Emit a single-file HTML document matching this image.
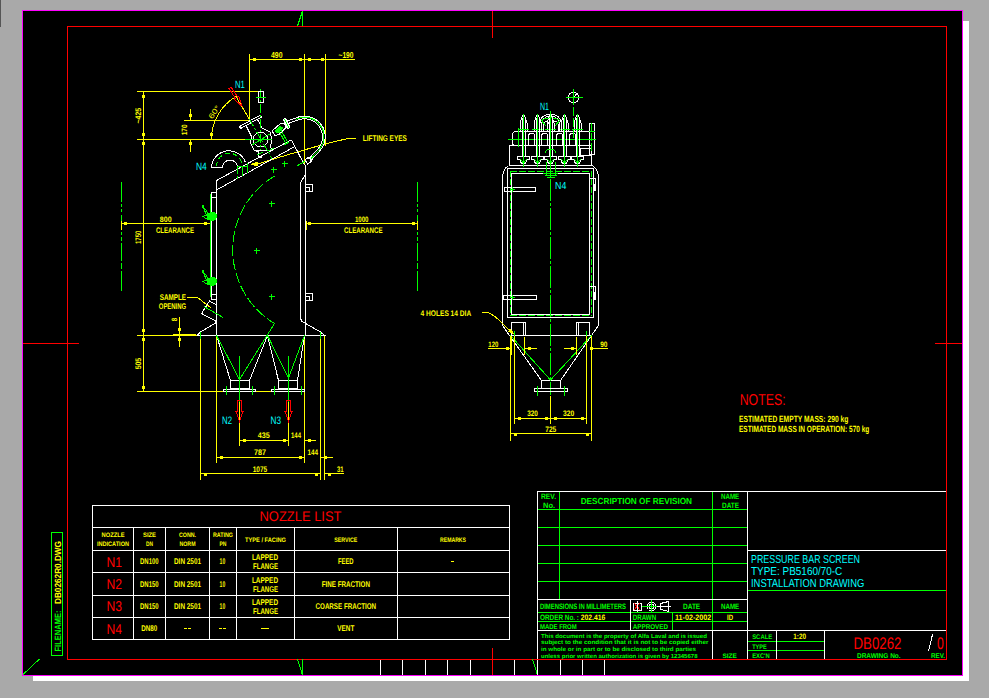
<!DOCTYPE html>
<html><head><meta charset="utf-8"><title>DB0262 Pressure Bar Screen - Installation Drawing</title>
<style>
html,body{margin:0;padding:0;background:#a9a9a9;overflow:hidden}
svg{display:block;font-family:"Liberation Sans",sans-serif}
svg text{stroke:none}
</style></head><body>
<svg width="989" height="698" viewBox="0 0 989 698" shape-rendering="crispEdges" fill="none" stroke-width="1" text-rendering="geometricPrecision">
<rect x="0" y="0" width="989" height="698" fill="#a9a9a9" stroke="none"/>
<rect x="0" y="0" width="1" height="27" fill="#555555" stroke="none"/>
<rect x="963" y="21" width="6" height="660" fill="#ffffff" stroke="none"/>
<rect x="33" y="676" width="936" height="5" fill="#ffffff" stroke="none"/>
<rect x="22" y="10" width="941" height="666" fill="#000000" stroke="none"/>
<rect x="22.5" y="10.5" width="940" height="665" stroke="#ff00ff" fill="none"/>
<rect x="67.5" y="26.5" width="879" height="633" stroke="#ff0000" fill="none"/>
<line x1="492.5" y1="11" x2="492.5" y2="38" stroke="#ff0000"/>
<line x1="492.5" y1="648" x2="492.5" y2="675" stroke="#ff0000"/>
<line x1="23" y1="343.5" x2="79" y2="343.5" stroke="#ff0000"/>
<line x1="935" y1="343.5" x2="962" y2="343.5" stroke="#ff0000"/>
<line x1="302.5" y1="11" x2="302.5" y2="26" stroke="#00ff00"/>
<line x1="302.5" y1="11" x2="297.5" y2="26" stroke="#00ff00"/>
<line x1="302.5" y1="659" x2="302.5" y2="675" stroke="#00ff00"/>
<line x1="297.5" y1="659.5" x2="302.5" y2="675" stroke="#00ff00"/>
<line x1="532.5" y1="659.5" x2="537.5" y2="675" stroke="#00ff00"/>
<line x1="23" y1="674.5" x2="39.5" y2="659" stroke="#00ff00"/>
<line x1="380.5" y1="660" x2="380.5" y2="675" stroke="#ffffff"/>
<line x1="402.5" y1="660" x2="402.5" y2="675" stroke="#ffffff"/>
<line x1="425.5" y1="660" x2="425.5" y2="675" stroke="#ffffff"/>
<line x1="447.5" y1="660" x2="447.5" y2="675" stroke="#ffffff"/>
<line x1="470.5" y1="660" x2="470.5" y2="675" stroke="#ffffff"/>
<line x1="514.5" y1="660" x2="514.5" y2="675" stroke="#ffffff"/>
<line x1="537.5" y1="660" x2="537.5" y2="675" stroke="#ffffff"/>
<line x1="560.5" y1="660" x2="560.5" y2="675" stroke="#ffffff"/>
<line x1="582.5" y1="660" x2="582.5" y2="675" stroke="#ffffff"/>
<line x1="604.5" y1="660" x2="604.5" y2="675" stroke="#ffffff"/>
<rect x="51.5" y="532.5" width="11" height="123" stroke="#00ff00" fill="none"/>
<text x="61" y="651.5" font-size="9.08" fill="#00ff00" textLength="41" lengthAdjust="spacingAndGlyphs" font-weight="bold" transform="rotate(-90 61 651.5)">FILENAME:</text>
<text x="61" y="604" font-size="9.08" fill="#ffff00" textLength="63" lengthAdjust="spacingAndGlyphs" font-weight="bold" transform="rotate(-90 61 604)">DB0262R0.DWG</text>
<rect x="92.5" y="505.5" width="417" height="134" stroke="#ffffff" fill="none"/>
<line x1="92" y1="527.5" x2="510" y2="527.5" stroke="#ffffff"/>
<line x1="92" y1="550.5" x2="510" y2="550.5" stroke="#ffffff"/>
<line x1="92" y1="572.5" x2="510" y2="572.5" stroke="#ffffff"/>
<line x1="92" y1="595.5" x2="510" y2="595.5" stroke="#ffffff"/>
<line x1="92" y1="617.5" x2="510" y2="617.5" stroke="#ffffff"/>
<line x1="133.5" y1="527" x2="133.5" y2="639" stroke="#ffffff"/>
<line x1="165.5" y1="527" x2="165.5" y2="639" stroke="#ffffff"/>
<line x1="209.5" y1="527" x2="209.5" y2="639" stroke="#ffffff"/>
<line x1="236.5" y1="527" x2="236.5" y2="639" stroke="#ffffff"/>
<line x1="294.5" y1="527" x2="294.5" y2="639" stroke="#ffffff"/>
<line x1="397.5" y1="527" x2="397.5" y2="639" stroke="#ffffff"/>
<text x="259.5" y="521" font-size="13.97" fill="#ff0000" textLength="82" lengthAdjust="spacingAndGlyphs">NOZZLE LIST</text>
<text x="101.5" y="536.5" font-size="6.42" fill="#ffff00" textLength="23" lengthAdjust="spacingAndGlyphs" font-weight="bold">NOZZLE</text>
<text x="97" y="546" font-size="6.42" fill="#ffff00" textLength="32" lengthAdjust="spacingAndGlyphs" font-weight="bold">INDICATION</text>
<text x="143" y="536.5" font-size="6.42" fill="#ffff00" textLength="13" lengthAdjust="spacingAndGlyphs" font-weight="bold">SIZE</text>
<text x="146" y="546" font-size="6.42" fill="#ffff00" textLength="7" lengthAdjust="spacingAndGlyphs" font-weight="bold">DN</text>
<text x="179" y="536.5" font-size="6.42" fill="#ffff00" textLength="17" lengthAdjust="spacingAndGlyphs" font-weight="bold">CONN.</text>
<text x="179.5" y="546" font-size="6.42" fill="#ffff00" textLength="16" lengthAdjust="spacingAndGlyphs" font-weight="bold">NORM</text>
<text x="213" y="536.5" font-size="6.42" fill="#ffff00" textLength="20" lengthAdjust="spacingAndGlyphs" font-weight="bold">RATING</text>
<text x="219.5" y="546" font-size="6.42" fill="#ffff00" textLength="7" lengthAdjust="spacingAndGlyphs" font-weight="bold">PN</text>
<text x="245" y="542" font-size="6.42" fill="#ffff00" textLength="41" lengthAdjust="spacingAndGlyphs" font-weight="bold">TYPE / FACING</text>
<text x="334.2" y="542" font-size="6.42" fill="#ffff00" textLength="23" lengthAdjust="spacingAndGlyphs" font-weight="bold">SERVICE</text>
<text x="440" y="542" font-size="6.42" fill="#ffff00" textLength="26" lengthAdjust="spacingAndGlyphs" font-weight="bold">REMARKS</text>
<text x="106.5" y="566.5" font-size="14.25" fill="#ff0000" textLength="15.5" lengthAdjust="spacingAndGlyphs">N1</text>
<text x="140.05" y="564.3" font-size="8.38" fill="#ffff00" textLength="18.5" lengthAdjust="spacingAndGlyphs" font-weight="bold">DN100</text>
<text x="174" y="564.3" font-size="8.38" fill="#ffff00" textLength="27" lengthAdjust="spacingAndGlyphs" font-weight="bold">DIN 2501</text>
<text x="219.6" y="564.3" font-size="8.38" fill="#ffff00" textLength="5.6" lengthAdjust="spacingAndGlyphs" font-weight="bold">10</text>
<text x="251.9" y="560.3" font-size="8.38" fill="#ffff00" textLength="26.2" lengthAdjust="spacingAndGlyphs" font-weight="bold">LAPPED</text>
<text x="253" y="569.2" font-size="8.38" fill="#ffff00" textLength="25" lengthAdjust="spacingAndGlyphs" font-weight="bold">FLANGE</text>
<text x="338" y="564.3" font-size="8.38" fill="#ffff00" textLength="15.6" lengthAdjust="spacingAndGlyphs" font-weight="bold">FEED</text>
<text x="106.5" y="588.8" font-size="14.25" fill="#ff0000" textLength="15.5" lengthAdjust="spacingAndGlyphs">N2</text>
<text x="140.05" y="586.6" font-size="8.38" fill="#ffff00" textLength="18.5" lengthAdjust="spacingAndGlyphs" font-weight="bold">DN150</text>
<text x="174" y="586.6" font-size="8.38" fill="#ffff00" textLength="27" lengthAdjust="spacingAndGlyphs" font-weight="bold">DIN 2501</text>
<text x="219.6" y="586.6" font-size="8.38" fill="#ffff00" textLength="5.6" lengthAdjust="spacingAndGlyphs" font-weight="bold">10</text>
<text x="251.9" y="582.6" font-size="8.38" fill="#ffff00" textLength="26.2" lengthAdjust="spacingAndGlyphs" font-weight="bold">LAPPED</text>
<text x="253" y="591.5" font-size="8.38" fill="#ffff00" textLength="25" lengthAdjust="spacingAndGlyphs" font-weight="bold">FLANGE</text>
<text x="321.65" y="586.6" font-size="8.38" fill="#ffff00" textLength="48.3" lengthAdjust="spacingAndGlyphs" font-weight="bold">FINE FRACTION</text>
<text x="106.5" y="611.3" font-size="14.25" fill="#ff0000" textLength="15.5" lengthAdjust="spacingAndGlyphs">N3</text>
<text x="140.05" y="609.1" font-size="8.38" fill="#ffff00" textLength="18.5" lengthAdjust="spacingAndGlyphs" font-weight="bold">DN150</text>
<text x="174" y="609.1" font-size="8.38" fill="#ffff00" textLength="27" lengthAdjust="spacingAndGlyphs" font-weight="bold">DIN 2501</text>
<text x="219.6" y="609.1" font-size="8.38" fill="#ffff00" textLength="5.6" lengthAdjust="spacingAndGlyphs" font-weight="bold">10</text>
<text x="251.9" y="605.1" font-size="8.38" fill="#ffff00" textLength="26.2" lengthAdjust="spacingAndGlyphs" font-weight="bold">LAPPED</text>
<text x="253" y="614" font-size="8.38" fill="#ffff00" textLength="25" lengthAdjust="spacingAndGlyphs" font-weight="bold">FLANGE</text>
<text x="315.55" y="609.1" font-size="8.38" fill="#ffff00" textLength="60.5" lengthAdjust="spacingAndGlyphs" font-weight="bold">COARSE FRACTION</text>
<text x="106.5" y="633.6" font-size="14.25" fill="#ff0000" textLength="15.5" lengthAdjust="spacingAndGlyphs">N4</text>
<text x="141.3" y="631.4" font-size="8.38" fill="#ffff00" textLength="16" lengthAdjust="spacingAndGlyphs" font-weight="bold">DN80</text>
<line x1="184" y1="628.5" x2="187" y2="628.5" stroke="#ffff00"/>
<line x1="188" y1="628.5" x2="191" y2="628.5" stroke="#ffff00"/>
<line x1="219" y1="628.5" x2="222" y2="628.5" stroke="#ffff00"/>
<line x1="223" y1="628.5" x2="226" y2="628.5" stroke="#ffff00"/>
<line x1="261" y1="628.5" x2="269" y2="628.5" stroke="#ffff00"/>
<text x="337.3" y="631.4" font-size="8.38" fill="#ffff00" textLength="17" lengthAdjust="spacingAndGlyphs" font-weight="bold">VENT</text>
<line x1="451" y1="561.5" x2="454" y2="561.5" stroke="#ffff00"/>
<line x1="537" y1="509.5" x2="748" y2="509.5" stroke="#00ff00"/>
<line x1="537" y1="527.5" x2="748" y2="527.5" stroke="#00ff00"/>
<line x1="537" y1="545.5" x2="748" y2="545.5" stroke="#00ff00"/>
<line x1="537" y1="563.5" x2="748" y2="563.5" stroke="#00ff00"/>
<line x1="537" y1="581.5" x2="748" y2="581.5" stroke="#00ff00"/>
<line x1="559.5" y1="491" x2="559.5" y2="599" stroke="#00ff00"/>
<line x1="712.5" y1="491" x2="712.5" y2="630" stroke="#00ff00"/>
<line x1="537" y1="612.5" x2="748" y2="612.5" stroke="#00ff00"/>
<line x1="537" y1="621.5" x2="748" y2="621.5" stroke="#00ff00"/>
<line x1="672.5" y1="612" x2="672.5" y2="630" stroke="#00ff00"/>
<line x1="747" y1="590.5" x2="946" y2="590.5" stroke="#00ff00"/>
<line x1="747" y1="641.5" x2="825" y2="641.5" stroke="#00ff00"/>
<line x1="747" y1="650.5" x2="825" y2="650.5" stroke="#00ff00"/>
<line x1="537" y1="491.5" x2="946" y2="491.5" stroke="#ffffff"/>
<line x1="537.5" y1="491" x2="537.5" y2="659" stroke="#ffffff"/>
<line x1="747.5" y1="491" x2="747.5" y2="659" stroke="#ffffff"/>
<line x1="537" y1="599.5" x2="748" y2="599.5" stroke="#ffffff"/>
<line x1="537" y1="630.5" x2="946" y2="630.5" stroke="#ffffff"/>
<line x1="747" y1="550.5" x2="946" y2="550.5" stroke="#ffffff"/>
<line x1="630.5" y1="599" x2="630.5" y2="630" stroke="#ffffff"/>
<line x1="712.5" y1="630" x2="712.5" y2="659" stroke="#ffffff"/>
<line x1="776.5" y1="630" x2="776.5" y2="659" stroke="#ffffff"/>
<line x1="824.5" y1="630" x2="824.5" y2="659" stroke="#ffffff"/>
<text x="541" y="499.2" font-size="7.82" fill="#00ff00" textLength="15" lengthAdjust="spacingAndGlyphs" font-weight="bold">REV.</text>
<text x="543" y="507.8" font-size="7.82" fill="#00ff00" textLength="12" lengthAdjust="spacingAndGlyphs" font-weight="bold">No.</text>
<text x="580.7" y="504" font-size="8.8" fill="#00ff00" textLength="111.3" lengthAdjust="spacingAndGlyphs" font-weight="bold">DESCRIPTION  OF  REVISION</text>
<text x="721" y="499.2" font-size="7.82" fill="#00ff00" textLength="18.2" lengthAdjust="spacingAndGlyphs" font-weight="bold">NAME</text>
<text x="722" y="507.8" font-size="7.82" fill="#00ff00" textLength="17" lengthAdjust="spacingAndGlyphs" font-weight="bold">DATE</text>
<text x="540" y="609.2" font-size="7.82" fill="#00ff00" textLength="86" lengthAdjust="spacingAndGlyphs" font-weight="bold">DIMENSIONS IN MILLIMETERS</text>
<text x="540" y="620.3" font-size="7.82" fill="#00ff00" textLength="39" lengthAdjust="spacingAndGlyphs" font-weight="bold">ORDER No. :</text>
<text x="580.7" y="620.3" font-size="7.82" fill="#ffff00" textLength="24.5" lengthAdjust="spacingAndGlyphs" font-weight="bold">202.416</text>
<text x="540" y="629" font-size="6.98" fill="#00ff00" textLength="36.7" lengthAdjust="spacingAndGlyphs" font-weight="bold">MADE FROM</text>
<text x="632.8" y="620.3" font-size="7.82" fill="#00ff00" textLength="23.3" lengthAdjust="spacingAndGlyphs" font-weight="bold">DRAWN</text>
<text x="632.8" y="629" font-size="6.98" fill="#00ff00" textLength="35.2" lengthAdjust="spacingAndGlyphs" font-weight="bold">APPROVED</text>
<text x="683" y="609.2" font-size="7.82" fill="#00ff00" textLength="17.2" lengthAdjust="spacingAndGlyphs" font-weight="bold">DATE</text>
<text x="721" y="609.2" font-size="7.82" fill="#00ff00" textLength="18.2" lengthAdjust="spacingAndGlyphs" font-weight="bold">NAME</text>
<text x="675" y="620.3" font-size="7.82" fill="#ffff00" textLength="36.3" lengthAdjust="spacingAndGlyphs" font-weight="bold">11-02-2002</text>
<text x="727" y="620.3" font-size="7.82" fill="#ffff00" textLength="6" lengthAdjust="spacingAndGlyphs" font-weight="bold">ID</text>
<text x="541" y="637.5" font-size="5.87" fill="#00ff00" textLength="166" lengthAdjust="spacingAndGlyphs" font-weight="bold">This document is the property of Alfa Laval and is issued</text>
<text x="541" y="644.4" font-size="5.87" fill="#00ff00" textLength="167.5" lengthAdjust="spacingAndGlyphs" font-weight="bold">subject to the condition that it is not to be copied either</text>
<text x="541" y="651.2" font-size="5.87" fill="#00ff00" textLength="155" lengthAdjust="spacingAndGlyphs" font-weight="bold">in whole or in part or to be disclosed to third parties</text>
<text x="541" y="658" font-size="5.87" fill="#00ff00" textLength="156.5" lengthAdjust="spacingAndGlyphs" font-weight="bold">unless prior written authorization is given by 12345678</text>
<text x="722.4" y="658" font-size="6.42" fill="#00ff00" textLength="14.5" lengthAdjust="spacingAndGlyphs" font-weight="bold">SIZE</text>
<text x="752.2" y="639" font-size="6.7" fill="#00ff00" textLength="20" lengthAdjust="spacingAndGlyphs" font-weight="bold">SCALE</text>
<text x="752.2" y="648.8" font-size="6.7" fill="#00ff00" textLength="14.5" lengthAdjust="spacingAndGlyphs" font-weight="bold">TYPE</text>
<text x="752.2" y="658" font-size="6.7" fill="#00ff00" textLength="17.5" lengthAdjust="spacingAndGlyphs" font-weight="bold">EXC&#x27;N</text>
<text x="793.3" y="639" font-size="7.82" fill="#ffff00" textLength="12.7" lengthAdjust="spacingAndGlyphs" font-weight="bold">1:20</text>
<text x="751" y="562.8" font-size="11.59" fill="#00ffff" textLength="109" lengthAdjust="spacingAndGlyphs">PRESSURE BAR SCREEN</text>
<text x="751" y="575.2" font-size="11.59" fill="#00ffff" textLength="91.3" lengthAdjust="spacingAndGlyphs">TYPE: PB5160/70-C</text>
<text x="751" y="587.2" font-size="11.59" fill="#00ffff" textLength="113.3" lengthAdjust="spacingAndGlyphs">INSTALLATION DRAWING</text>
<text x="853.5" y="648.8" font-size="16.76" fill="#ff0000" textLength="48" lengthAdjust="spacingAndGlyphs">DB0262</text>
<line x1="932.5" y1="634.5" x2="928.5" y2="651" stroke="#ffffff"/>
<text x="937" y="648.8" font-size="16.76" fill="#ff0000" textLength="6.8" lengthAdjust="spacingAndGlyphs">0</text>
<text x="857" y="657.8" font-size="6.98" fill="#00ff00" textLength="43.6" lengthAdjust="spacingAndGlyphs" font-weight="bold">DRAWING No.</text>
<text x="931" y="657.8" font-size="6.98" fill="#00ff00" textLength="14" lengthAdjust="spacingAndGlyphs" font-weight="bold">REV.</text>
<rect x="633.5" y="603.5" width="8" height="7" stroke="#ffffff" fill="none"/>
<line x1="634" y1="603" x2="640" y2="610" stroke="#ff0000"/>
<line x1="640" y1="603" x2="634" y2="610" stroke="#ff0000"/>
<line x1="637.5" y1="601" x2="637.5" y2="612" stroke="#ffffff"/>
<circle cx="651.5" cy="606.5" r="4.5" stroke="#ffffff" fill="none"/>
<circle cx="651.5" cy="606.5" r="2.5" stroke="#ffffff" fill="none"/>
<line x1="642" y1="606.5" x2="659" y2="606.5" stroke="#00ff00"/>
<line x1="651.5" y1="600" x2="651.5" y2="613" stroke="#00ff00"/>
<polygon points="660.5,603.5 668.5,601.5 668.5,611.5 660.5,609.5" stroke="#ffffff" fill="none"/>
<line x1="657" y1="606.5" x2="671" y2="606.5" stroke="#ffffff"/>
<text x="739.7" y="405" font-size="15.78" fill="#ff0000" textLength="46" lengthAdjust="spacingAndGlyphs">NOTES:</text>
<text x="739" y="421.5" font-size="8.94" fill="#ffff00" textLength="109.3" lengthAdjust="spacingAndGlyphs" font-weight="bold">ESTIMATED EMPTY MASS: 290 kg</text>
<text x="739" y="432.2" font-size="8.94" fill="#ffff00" textLength="130.3" lengthAdjust="spacingAndGlyphs" font-weight="bold">ESTIMATED MASS IN OPERATION: 570 kg</text>
<line x1="249" y1="59.5" x2="355" y2="59.5" stroke="#ffff00"/>
<line x1="249.5" y1="54" x2="249.5" y2="121" stroke="#ffff00"/>
<line x1="304.5" y1="54" x2="304.5" y2="165" stroke="#ffff00"/>
<line x1="325.5" y1="54" x2="325.5" y2="146" stroke="#ffff00"/>
<rect x="253" y="58" width="3" height="3" fill="#ffff00" stroke="none"/>
<rect x="299" y="58" width="3" height="3" fill="#ffff00" stroke="none"/>
<rect x="308" y="58" width="3" height="3" fill="#ffff00" stroke="none"/>
<rect x="321" y="58" width="3" height="3" fill="#ffff00" stroke="none"/>
<text x="271" y="58" font-size="8.66" fill="#ffff00" textLength="11.5" lengthAdjust="spacingAndGlyphs" font-weight="bold">490</text>
<text x="338.5" y="58" font-size="8.66" fill="#ffff00" textLength="15" lengthAdjust="spacingAndGlyphs" font-weight="bold">~190</text>
<line x1="137" y1="91.5" x2="258" y2="91.5" stroke="#ffff00"/>
<line x1="137" y1="139.5" x2="245" y2="139.5" stroke="#ffff00"/>
<line x1="137" y1="335.5" x2="197" y2="335.5" stroke="#ffff00"/>
<line x1="137" y1="391.5" x2="305" y2="391.5" stroke="#ffff00"/>
<line x1="143.5" y1="91" x2="143.5" y2="392" stroke="#ffff00"/>
<rect x="142" y="95" width="3" height="3" fill="#ffff00" stroke="none"/>
<rect x="142" y="133" width="3" height="3" fill="#ffff00" stroke="none"/>
<rect x="142" y="142" width="3" height="3" fill="#ffff00" stroke="none"/>
<rect x="142" y="329" width="3" height="3" fill="#ffff00" stroke="none"/>
<rect x="142" y="338" width="3" height="3" fill="#ffff00" stroke="none"/>
<rect x="142" y="386" width="3" height="3" fill="#ffff00" stroke="none"/>
<text x="140.7" y="123.5" font-size="8.1" fill="#ffff00" textLength="15.7" lengthAdjust="spacingAndGlyphs" font-weight="bold" transform="rotate(-90 140.7 123.5)">~425</text>
<text x="141.4" y="244" font-size="8.1" fill="#ffff00" textLength="13.5" lengthAdjust="spacingAndGlyphs" font-weight="bold" transform="rotate(-90 141.4 244)">1750</text>
<text x="141.3" y="369.3" font-size="8.1" fill="#ffff00" textLength="11.5" lengthAdjust="spacingAndGlyphs" font-weight="bold" transform="rotate(-90 141.3 369.3)">505</text>
<line x1="190.5" y1="109" x2="190.5" y2="121" stroke="#ffff00"/>
<line x1="190.5" y1="139" x2="190.5" y2="152" stroke="#ffff00"/>
<line x1="184" y1="120.5" x2="250" y2="120.5" stroke="#ffff00"/>
<rect x="189" y="114" width="3" height="3" fill="#ffff00" stroke="none"/>
<rect x="189" y="142" width="3" height="3" fill="#ffff00" stroke="none"/>
<text x="187.3" y="135.3" font-size="7.82" fill="#ffff00" textLength="10.8" lengthAdjust="spacingAndGlyphs" font-weight="bold" transform="rotate(-90 187.3 135.3)">170</text>
<path d="M211.5,139.5 A50,50 0 0 1 236,96.5" stroke="#ffff00" fill="none"/>
<line x1="236" y1="96.5" x2="249.5" y2="119.5" stroke="#ffff00"/>
<rect x="210" y="133" width="3" height="3" fill="#ffff00" stroke="none"/>
<text x="212.3" y="119.5" font-size="7.4" fill="#ffff00" textLength="14.5" lengthAdjust="spacingAndGlyphs" transform="rotate(-56 212.3 119.5)">60°</text>
<polygon points="231.29,87.29 229.11,88.71 235.4,98.34 234.15,99.16 242.23,106.41 238.83,96.09 237.58,96.91" stroke="#ff0000" fill="none"/>
<text x="235" y="88" font-size="10.61" fill="#00ffff" textLength="9.8" lengthAdjust="spacingAndGlyphs">N1</text>
<line x1="121" y1="223.5" x2="211" y2="223.5" stroke="#ffff00"/>
<line x1="306" y1="223.5" x2="418" y2="223.5" stroke="#ffff00"/>
<line x1="306.5" y1="221" x2="306.5" y2="230" stroke="#ffff00"/>
<rect x="124" y="222" width="3" height="3" fill="#ffff00" stroke="none"/>
<rect x="204" y="222" width="3" height="3" fill="#ffff00" stroke="none"/>
<rect x="308" y="222" width="3" height="3" fill="#ffff00" stroke="none"/>
<rect x="412" y="222" width="3" height="3" fill="#ffff00" stroke="none"/>
<text x="159.8" y="221.6" font-size="7.82" fill="#ffff00" textLength="11.8" lengthAdjust="spacingAndGlyphs" font-weight="bold">800</text>
<text x="156" y="233.2" font-size="8.1" fill="#ffff00" textLength="38" lengthAdjust="spacingAndGlyphs" font-weight="bold">CLEARANCE</text>
<text x="355" y="221.6" font-size="7.82" fill="#ffff00" textLength="13.5" lengthAdjust="spacingAndGlyphs" font-weight="bold">1000</text>
<text x="344" y="233.2" font-size="8.1" fill="#ffff00" textLength="38.5" lengthAdjust="spacingAndGlyphs" font-weight="bold">CLEARANCE</text>
<line x1="121.5" y1="182" x2="121.5" y2="202" stroke="#00ff00"/>
<line x1="121.5" y1="204" x2="121.5" y2="207" stroke="#00ff00"/>
<line x1="121.5" y1="209" x2="121.5" y2="212" stroke="#00ff00"/>
<line x1="121.5" y1="215" x2="121.5" y2="221" stroke="#00ff00"/>
<line x1="121.5" y1="232" x2="121.5" y2="235" stroke="#00ff00"/>
<line x1="121.5" y1="237" x2="121.5" y2="241" stroke="#00ff00"/>
<line x1="121.5" y1="243" x2="121.5" y2="261" stroke="#00ff00"/>
<line x1="121.5" y1="263" x2="121.5" y2="269" stroke="#00ff00"/>
<line x1="121.5" y1="271" x2="121.5" y2="291" stroke="#00ff00"/>
<line x1="121.5" y1="221" x2="121.5" y2="230" stroke="#ffff00"/>
<line x1="417.5" y1="182" x2="417.5" y2="202" stroke="#00ff00"/>
<line x1="417.5" y1="204" x2="417.5" y2="207" stroke="#00ff00"/>
<line x1="417.5" y1="209" x2="417.5" y2="212" stroke="#00ff00"/>
<line x1="417.5" y1="215" x2="417.5" y2="221" stroke="#00ff00"/>
<line x1="417.5" y1="232" x2="417.5" y2="235" stroke="#00ff00"/>
<line x1="417.5" y1="237" x2="417.5" y2="241" stroke="#00ff00"/>
<line x1="417.5" y1="243" x2="417.5" y2="261" stroke="#00ff00"/>
<line x1="417.5" y1="263" x2="417.5" y2="269" stroke="#00ff00"/>
<line x1="417.5" y1="271" x2="417.5" y2="291" stroke="#00ff00"/>
<line x1="417.5" y1="221" x2="417.5" y2="230" stroke="#ffff00"/>
<line x1="179.5" y1="317" x2="179.5" y2="347" stroke="#ffff00"/>
<line x1="173" y1="334.5" x2="196" y2="334.5" stroke="#ffff00"/>
<rect x="178" y="328" width="3" height="3" fill="#ffff00" stroke="none"/>
<rect x="178" y="338" width="3" height="3" fill="#ffff00" stroke="none"/>
<text x="177" y="321.2" font-size="7.82" fill="#ffff00" textLength="3.4" lengthAdjust="spacingAndGlyphs" font-weight="bold" transform="rotate(-90 177 321.2)">8</text>
<text x="159.7" y="300" font-size="8.24" fill="#ffff00" textLength="26.3" lengthAdjust="spacingAndGlyphs" font-weight="bold">SAMPLE</text>
<text x="158.8" y="309" font-size="8.24" fill="#ffff00" textLength="27.2" lengthAdjust="spacingAndGlyphs" font-weight="bold">OPENING</text>
<line x1="187" y1="297.5" x2="198" y2="297.5" stroke="#ffff00"/>
<line x1="197.5" y1="297.5" x2="211" y2="308" stroke="#ffff00"/>
<text x="362.8" y="141" font-size="8.38" fill="#ffff00" textLength="44" lengthAdjust="spacingAndGlyphs" font-weight="bold">LIFTING EYES</text>
<path d="M355.5,138.5 L348.5,138.5 C325,143 290,154 256,164.5" stroke="#ffff00" fill="none"/>
<polygon points="251,164.5 257,162.5 257,165.5" stroke="#ffff00" fill="#ffff00"/>
<line x1="200.5" y1="336" x2="200.5" y2="480" stroke="#ffff00"/>
<line x1="216.5" y1="336" x2="216.5" y2="463" stroke="#ffff00"/>
<line x1="304.5" y1="336" x2="304.5" y2="463" stroke="#ffff00"/>
<line x1="320.5" y1="336" x2="320.5" y2="480" stroke="#ffff00"/>
<line x1="324.5" y1="336" x2="324.5" y2="480" stroke="#ffff00"/>
<line x1="239.5" y1="402" x2="239.5" y2="446" stroke="#ffff00"/>
<line x1="288.5" y1="402" x2="288.5" y2="446" stroke="#ffff00"/>
<line x1="239" y1="440.5" x2="289" y2="440.5" stroke="#ffff00"/>
<line x1="304" y1="440.5" x2="316" y2="440.5" stroke="#ffff00"/>
<rect x="243" y="439" width="3" height="3" fill="#ffff00" stroke="none"/>
<rect x="283" y="439" width="3" height="3" fill="#ffff00" stroke="none"/>
<rect x="308" y="439" width="3" height="3" fill="#ffff00" stroke="none"/>
<line x1="216" y1="457.5" x2="305" y2="457.5" stroke="#ffff00"/>
<line x1="320" y1="457.5" x2="333" y2="457.5" stroke="#ffff00"/>
<rect x="220" y="456" width="3" height="3" fill="#ffff00" stroke="none"/>
<rect x="299" y="456" width="3" height="3" fill="#ffff00" stroke="none"/>
<rect x="324" y="456" width="3" height="3" fill="#ffff00" stroke="none"/>
<line x1="200" y1="473.5" x2="321" y2="473.5" stroke="#ffff00"/>
<line x1="324" y1="473.5" x2="344" y2="473.5" stroke="#ffff00"/>
<rect x="204" y="473" width="3" height="3" fill="#ffff00" stroke="none"/>
<rect x="315" y="473" width="3" height="3" fill="#ffff00" stroke="none"/>
<rect x="328" y="473" width="3" height="3" fill="#ffff00" stroke="none"/>
<text x="257.7" y="437.9" font-size="8.1" fill="#ffff00" textLength="12" lengthAdjust="spacingAndGlyphs" font-weight="bold">435</text>
<text x="291" y="437.9" font-size="8.1" fill="#ffff00" textLength="10" lengthAdjust="spacingAndGlyphs" font-weight="bold">144</text>
<text x="254" y="455" font-size="8.1" fill="#ffff00" textLength="12" lengthAdjust="spacingAndGlyphs" font-weight="bold">787</text>
<text x="307.4" y="455" font-size="8.1" fill="#ffff00" textLength="10.6" lengthAdjust="spacingAndGlyphs" font-weight="bold">144</text>
<text x="252.75" y="471.6" font-size="8.1" fill="#ffff00" textLength="14.5" lengthAdjust="spacingAndGlyphs" font-weight="bold">1075</text>
<text x="337" y="471.6" font-size="8.1" fill="#ffff00" textLength="6.6" lengthAdjust="spacingAndGlyphs" font-weight="bold">31</text>
<line x1="216.5" y1="180" x2="216.5" y2="336" stroke="#ffffff"/>
<line x1="211.5" y1="192" x2="211.5" y2="300" stroke="#ffffff"/>
<line x1="211" y1="192.5" x2="217" y2="192.5" stroke="#ffffff"/>
<line x1="211" y1="197.5" x2="217" y2="197.5" stroke="#ffffff"/>
<line x1="211" y1="294.5" x2="217" y2="294.5" stroke="#ffffff"/>
<line x1="211" y1="299.5" x2="217" y2="299.5" stroke="#ffffff"/>
<line x1="216.5" y1="180.5" x2="290" y2="140.5" stroke="#ffffff"/>
<line x1="216.5" y1="190" x2="294" y2="147" stroke="#ffffff"/>
<polyline points="290,140.5 292,141 304.5,165" stroke="#ffffff" fill="none"/>
<line x1="305.5" y1="165" x2="305.5" y2="336" stroke="#ffffff"/>
<line x1="300.5" y1="183" x2="300.5" y2="318" stroke="#ffffff"/>
<line x1="300.5" y1="183" x2="305.5" y2="174" stroke="#ffffff"/>
<polyline points="300.5,318 301.5,321 305.5,323.5 320.5,332 324.5,335.5" stroke="#ffffff" fill="none"/>
<polyline points="216.5,322.5 200.5,332 197,335.5" stroke="#ffffff" fill="none"/>
<line x1="197" y1="335.5" x2="326" y2="335.5" stroke="#ffffff"/>
<polyline points="306,184.5 312.5,184.5 312.5,191.5 306,191.5" stroke="#ffffff" fill="none"/>
<line x1="309.5" y1="187" x2="309.5" y2="192" stroke="#ffffff"/>
<line x1="306" y1="187.5" x2="310" y2="187.5" stroke="#ffffff"/>
<polyline points="306,293.5 312.5,293.5 312.5,300.5 306,300.5" stroke="#ffffff" fill="none"/>
<line x1="309.5" y1="296" x2="309.5" y2="301" stroke="#ffffff"/>
<line x1="306" y1="296.5" x2="310" y2="296.5" stroke="#ffffff"/>
<polyline points="216.5,305 209.5,301 201.5,313.5 216.5,321.5" stroke="#ffffff" fill="none"/>
<line x1="204" y1="306.5" x2="223" y2="317.5" stroke="#00ff00"/>
<polyline points="216.5,335.5 230.5,380.5 249.5,380.5 267.5,335.5" stroke="#ffffff" fill="none"/>
<polyline points="267.5,335.5 278.5,380.5 297.5,380.5 304.5,335.5" stroke="#ffffff" fill="none"/>
<rect x="230.5" y="380.5" width="19" height="8" stroke="#ffffff" fill="none"/>
<rect x="278.5" y="380.5" width="19" height="8" stroke="#ffffff" fill="none"/>
<rect x="223.5" y="389.5" width="32" height="2" stroke="#ffffff" fill="none"/>
<rect x="271.5" y="389.5" width="33" height="2" stroke="#ffffff" fill="none"/>
<polyline points="216.5,335.5 239.5,379.5 274.5,323.5" stroke="#00ff00" fill="none"/>
<polyline points="267.5,335.5 288.5,378 304.5,335.5" stroke="#00ff00" fill="none"/>
<line x1="239.5" y1="356" x2="239.5" y2="402" stroke="#00ff00"/>
<line x1="288.5" y1="356" x2="288.5" y2="402" stroke="#00ff00"/>
<line x1="226.5" y1="386" x2="226.5" y2="395" stroke="#00ff00"/>
<line x1="252.5" y1="386" x2="252.5" y2="395" stroke="#00ff00"/>
<line x1="274.5" y1="386" x2="274.5" y2="395" stroke="#00ff00"/>
<line x1="301.5" y1="386" x2="301.5" y2="395" stroke="#00ff00"/>
<line x1="200.5" y1="332" x2="200.5" y2="339" stroke="#00ff00"/>
<line x1="320.5" y1="332" x2="320.5" y2="339" stroke="#00ff00"/>
<polygon points="237.5,400.5 241.5,400.5 241.5,411.5 243,411.5 239.5,421.5 236,411.5 237.5,411.5" stroke="#ff0000" fill="none"/>
<polygon points="286.5,400.5 290.5,400.5 290.5,411.5 292,411.5 288.5,421.5 285,411.5 286.5,411.5" stroke="#ff0000" fill="none"/>
<text x="222" y="423.8" font-size="10.89" fill="#00ffff" textLength="10" lengthAdjust="spacingAndGlyphs">N2</text>
<text x="270.5" y="423.8" font-size="10.89" fill="#00ffff" textLength="10.5" lengthAdjust="spacingAndGlyphs">N3</text>
<path d="M274.5,176 A86,86 0 0 0 274.5,323.5" stroke="#00ff00" fill="none" stroke-dasharray="11 3"/>
<line x1="281.5" y1="163.5" x2="287.5" y2="163.5" stroke="#00ff00"/>
<line x1="284.5" y1="160.5" x2="284.5" y2="166.5" stroke="#00ff00"/>
<line x1="270.5" y1="169.5" x2="276.5" y2="169.5" stroke="#00ff00"/>
<line x1="273.5" y1="166.5" x2="273.5" y2="172.5" stroke="#00ff00"/>
<line x1="268.5" y1="203.5" x2="274.5" y2="203.5" stroke="#00ff00"/>
<line x1="271.5" y1="200.5" x2="271.5" y2="206.5" stroke="#00ff00"/>
<line x1="253.5" y1="250.5" x2="259.5" y2="250.5" stroke="#00ff00"/>
<line x1="256.5" y1="247.5" x2="256.5" y2="253.5" stroke="#00ff00"/>
<line x1="268.5" y1="296.5" x2="274.5" y2="296.5" stroke="#00ff00"/>
<line x1="271.5" y1="293.5" x2="271.5" y2="299.5" stroke="#00ff00"/>
<ellipse cx="212.5" cy="216.3" rx="4.6" ry="4.4" fill="#00ff00" stroke="none"/>
<rect x="207" y="214" width="4" height="6" fill="#00ff00" stroke="none"/>
<rect x="202" y="205" width="2" height="3" fill="#00ff00" stroke="none"/>
<line x1="203" y1="207" x2="207" y2="216" stroke="#00ff00"/>
<line x1="204.5" y1="208" x2="209" y2="215" stroke="#00ff00"/>
<line x1="202" y1="217" x2="208" y2="214" stroke="#00ff00"/>
<line x1="204" y1="217.5" x2="209" y2="219.5" stroke="#00ff00"/>
<ellipse cx="212.5" cy="281.3" rx="4.6" ry="4.4" fill="#00ff00" stroke="none"/>
<rect x="207" y="279" width="4" height="6" fill="#00ff00" stroke="none"/>
<rect x="202" y="270" width="2" height="3" fill="#00ff00" stroke="none"/>
<line x1="203" y1="272" x2="207" y2="281" stroke="#00ff00"/>
<line x1="204.5" y1="273" x2="209" y2="280" stroke="#00ff00"/>
<line x1="202" y1="282" x2="208" y2="279" stroke="#00ff00"/>
<line x1="204" y1="282.5" x2="209" y2="284.5" stroke="#00ff00"/>
<line x1="210.5" y1="194" x2="210.5" y2="297" stroke="#00ff00"/>
<path d="M211.5,167.5 A17.5,17.5 0 0 1 245.5,162.5" stroke="#ffffff" fill="none"/>
<path d="M222.5,167.5 A7.5,7.5 0 0 1 237.5,167.5" stroke="#ffffff" fill="none"/>
<line x1="211" y1="167.5" x2="223" y2="167.5" stroke="#ffffff"/>
<path d="M216.5,166.5 A12.5,12.5 0 0 1 242,165.5" stroke="#00ff00" fill="none" stroke-dasharray="5 3"/>
<line x1="237.5" y1="167" x2="237.5" y2="179" stroke="#00ff00" stroke-dasharray="7 2"/>
<line x1="242.5" y1="166" x2="242.5" y2="176" stroke="#00ff00"/>
<line x1="247.5" y1="163" x2="247.5" y2="173" stroke="#00ff00"/>
<line x1="237" y1="166.5" x2="248" y2="166.5" stroke="#00ff00"/>
<text x="196" y="169.8" font-size="10.61" fill="#00ffff" textLength="10.8" lengthAdjust="spacingAndGlyphs">N4</text>
<line x1="239.5" y1="126.5" x2="260.5" y2="115" stroke="#ffffff"/>
<line x1="240.5" y1="128.5" x2="261.5" y2="117" stroke="#ffffff"/>
<line x1="239.5" y1="126.5" x2="240.5" y2="128.5" stroke="#ffffff"/>
<line x1="260.5" y1="115" x2="261.5" y2="117" stroke="#ffffff"/>
<line x1="246" y1="125.5" x2="251.5" y2="136.5" stroke="#ffffff"/>
<line x1="257.5" y1="119.5" x2="262" y2="128" stroke="#ffffff"/>
<line x1="251.5" y1="136.5" x2="250.5" y2="143" stroke="#ffffff"/>
<line x1="262" y1="128" x2="270" y2="132" stroke="#ffffff"/>
<circle cx="260.5" cy="139.5" r="7.3" stroke="#ffffff" fill="none"/>
<polyline points="250.5,143 254,150 258.5,152 258,156 262,158" stroke="#ffffff" fill="none"/>
<polyline points="270,132 272,139 270.5,146 271.5,150.5" stroke="#ffffff" fill="none"/>
<line x1="254" y1="150" x2="271.5" y2="150.5" stroke="#ffffff"/>
<line x1="260.5" y1="89" x2="260.5" y2="150" stroke="#00ff00" stroke-dasharray="9 2 2 2"/>
<line x1="245" y1="139.5" x2="272" y2="139.5" stroke="#00ff00"/>
<line x1="249.5" y1="119.5" x2="272" y2="158.5" stroke="#00ff00" stroke-dasharray="8 2 2 2"/>
<line x1="252" y1="145" x2="270" y2="134" stroke="#00ff00"/>
<line x1="257" y1="155" x2="263" y2="152" stroke="#00ff00"/>
<line x1="268" y1="151" x2="274" y2="148" stroke="#00ff00"/>
<rect x="258.5" y="91.5" width="5" height="11" stroke="#ffffff" fill="none"/>
<line x1="256" y1="97.5" x2="266" y2="97.5" stroke="#00ff00"/>
<path d="M285.5,121.5 L295.7,118 A20.8,20.8 0 0 1 320.4,150.2 L310.5,161" stroke="#ffffff" fill="none"/>
<path d="M286.5,124 L296.9,120.5 A18,18 0 0 1 318.3,148.4 L308.8,158.8" stroke="#ffffff" fill="none"/>
<path d="M296.3,119.2 A19.4,19.4 0 0 1 319.4,149.3 L310,159.8" stroke="#00ff00" fill="none"/>
<line x1="283.5" y1="119.5" x2="288" y2="128.5" stroke="#ffffff"/>
<line x1="285.5" y1="118.5" x2="290" y2="127.5" stroke="#ffffff"/>
<line x1="283.5" y1="119.5" x2="285.5" y2="118.5" stroke="#ffffff"/>
<line x1="288" y1="128.5" x2="290" y2="127.5" stroke="#ffffff"/>
<line x1="284.5" y1="119" x2="289" y2="128" stroke="#00ff00"/>
<polygon points="272,131 280.5,123.5 284.5,124 286,127.5 279,134.5 275,135.5" stroke="#ffffff" fill="none"/>
<polygon points="275,131 280,126.5 283,128 278,133" stroke="#00ff00" fill="#00ff00"/>
<line x1="278.5" y1="130" x2="286" y2="144" stroke="#00ff00"/>
<line x1="280.5" y1="129" x2="288" y2="143" stroke="#00ff00"/>
<line x1="284.5" y1="144.5" x2="289" y2="142.5" stroke="#00ff00"/>
<polygon points="305,160 309,157 312,161 307.5,164" stroke="#ffffff" fill="none"/>
<line x1="297" y1="166" x2="305" y2="161" stroke="#00ff00"/>
<line x1="502.5" y1="178" x2="502.5" y2="326" stroke="#ffffff"/>
<line x1="507.5" y1="168" x2="507.5" y2="318" stroke="#ffffff"/>
<line x1="511.5" y1="174" x2="511.5" y2="315" stroke="#ffffff"/>
<line x1="598.5" y1="178" x2="598.5" y2="326" stroke="#ffffff"/>
<line x1="593.5" y1="168" x2="593.5" y2="318" stroke="#ffffff"/>
<line x1="589.5" y1="174" x2="589.5" y2="315" stroke="#ffffff"/>
<line x1="510.5" y1="171" x2="510.5" y2="316" stroke="#00ff00" stroke-dasharray="6 2"/>
<line x1="591.5" y1="171" x2="591.5" y2="316" stroke="#00ff00" stroke-dasharray="6 2"/>
<path d="M502.5,178 Q503,169 508.5,165.5" stroke="#ffffff" fill="none"/>
<path d="M598.5,178 Q598,169 592.5,165.5" stroke="#ffffff" fill="none"/>
<line x1="507" y1="168.5" x2="594" y2="168.5" stroke="#ffffff"/>
<line x1="511" y1="173.5" x2="590" y2="173.5" stroke="#ffffff"/>
<line x1="510" y1="171.5" x2="592" y2="171.5" stroke="#00ff00" stroke-dasharray="7 2"/>
<line x1="511" y1="314.5" x2="590" y2="314.5" stroke="#ffffff"/>
<line x1="507" y1="317.5" x2="594" y2="317.5" stroke="#ffffff"/>
<line x1="510" y1="315.5" x2="592" y2="315.5" stroke="#00ff00" stroke-dasharray="7 2"/>
<line x1="502.5" y1="325.5" x2="509.5" y2="335.5" stroke="#ffffff"/>
<line x1="598.5" y1="325.5" x2="591.5" y2="335.5" stroke="#ffffff"/>
<line x1="509" y1="335.5" x2="592" y2="335.5" stroke="#ffffff"/>
<line x1="550.5" y1="179" x2="550.5" y2="395" stroke="#00ff00" stroke-dasharray="22 2 3 2"/>
<text x="555" y="188.8" font-size="10.34" fill="#00ffff" textLength="11.3" lengthAdjust="spacingAndGlyphs">N4</text>
<rect x="504.5" y="187.5" width="31" height="4" stroke="#ffffff" fill="none"/>
<line x1="507.5" y1="187" x2="507.5" y2="191" stroke="#ffffff"/>
<line x1="510" y1="189.5" x2="515" y2="189.5" stroke="#00ff00"/>
<line x1="512.5" y1="187" x2="512.5" y2="192" stroke="#00ff00"/>
<rect x="503.5" y="295.5" width="33" height="4" stroke="#ffffff" fill="none"/>
<line x1="507.5" y1="295" x2="507.5" y2="299" stroke="#ffffff"/>
<line x1="510" y1="297.5" x2="515" y2="297.5" stroke="#00ff00"/>
<line x1="512.5" y1="295" x2="512.5" y2="300" stroke="#00ff00"/>
<polyline points="590,178.5 595.5,178.5 595.5,190.5 593.5,190.5" stroke="#ffffff" fill="none"/>
<line x1="594.5" y1="184" x2="594.5" y2="190" stroke="#ffffff"/>
<polyline points="590,286.5 595.5,286.5 595.5,299.5 593.5,299.5" stroke="#ffffff" fill="none"/>
<line x1="594.5" y1="292" x2="594.5" y2="299" stroke="#ffffff"/>
<rect x="511.5" y="322.5" width="14" height="13" stroke="#ffffff" fill="none"/>
<line x1="523.5" y1="322" x2="523.5" y2="335" stroke="#ffffff"/>
<rect x="576.5" y="322.5" width="13" height="13" stroke="#ffffff" fill="none"/>
<line x1="578.5" y1="322" x2="578.5" y2="335" stroke="#ffffff"/>
<polyline points="509.5,335.5 541.5,380.5 560.5,380.5 591.5,335.5" stroke="#ffffff" fill="none"/>
<rect x="541.5" y="380.5" width="19" height="8" stroke="#ffffff" fill="none"/>
<rect x="534.5" y="388.5" width="33" height="3" stroke="#ffffff" fill="none"/>
<polyline points="510.5,335.5 550.5,380 591.5,335.5" stroke="#00ff00" fill="none"/>
<line x1="514.5" y1="331" x2="514.5" y2="340" stroke="#00ff00"/>
<line x1="586.5" y1="331" x2="586.5" y2="340" stroke="#00ff00"/>
<line x1="537.5" y1="386" x2="537.5" y2="396" stroke="#00ff00"/>
<line x1="564.5" y1="386" x2="564.5" y2="396" stroke="#00ff00"/>
<line x1="510.5" y1="336" x2="510.5" y2="441" stroke="#ffff00"/>
<line x1="514.5" y1="336" x2="514.5" y2="424" stroke="#ffff00"/>
<line x1="586.5" y1="336" x2="586.5" y2="424" stroke="#ffff00"/>
<line x1="591.5" y1="336" x2="591.5" y2="441" stroke="#ffff00"/>
<line x1="524.5" y1="337" x2="524.5" y2="355" stroke="#ffff00"/>
<line x1="576.5" y1="337" x2="576.5" y2="355" stroke="#ffff00"/>
<line x1="511.5" y1="336" x2="511.5" y2="355" stroke="#ffff00"/>
<line x1="550.5" y1="396" x2="550.5" y2="424" stroke="#ffff00"/>
<line x1="488" y1="348.5" x2="511" y2="348.5" stroke="#ffff00"/>
<line x1="524" y1="348.5" x2="537" y2="348.5" stroke="#ffff00"/>
<line x1="564" y1="348.5" x2="577" y2="348.5" stroke="#ffff00"/>
<line x1="591" y1="348.5" x2="608" y2="348.5" stroke="#ffff00"/>
<rect x="506" y="347" width="3" height="3" fill="#ffff00" stroke="none"/>
<rect x="528" y="347" width="3" height="3" fill="#ffff00" stroke="none"/>
<rect x="571" y="347" width="3" height="3" fill="#ffff00" stroke="none"/>
<rect x="590" y="347" width="3" height="3" fill="#ffff00" stroke="none"/>
<text x="488.3" y="346.8" font-size="7.82" fill="#ffff00" textLength="10" lengthAdjust="spacingAndGlyphs" font-weight="bold">120</text>
<text x="600.2" y="346.8" font-size="7.82" fill="#ffff00" textLength="7.2" lengthAdjust="spacingAndGlyphs" font-weight="bold">90</text>
<line x1="514" y1="418.5" x2="587" y2="418.5" stroke="#ffff00"/>
<rect x="518" y="417" width="3" height="3" fill="#ffff00" stroke="none"/>
<rect x="545" y="417" width="3" height="3" fill="#ffff00" stroke="none"/>
<rect x="554" y="417" width="3" height="3" fill="#ffff00" stroke="none"/>
<rect x="581" y="417" width="3" height="3" fill="#ffff00" stroke="none"/>
<text x="527.2" y="415.8" font-size="7.96" fill="#ffff00" textLength="10.7" lengthAdjust="spacingAndGlyphs" font-weight="bold">320</text>
<text x="563" y="415.8" font-size="7.96" fill="#ffff00" textLength="11.2" lengthAdjust="spacingAndGlyphs" font-weight="bold">320</text>
<line x1="510" y1="433.5" x2="592" y2="433.5" stroke="#ffff00"/>
<rect x="514" y="433" width="3" height="3" fill="#ffff00" stroke="none"/>
<rect x="586" y="433" width="3" height="3" fill="#ffff00" stroke="none"/>
<text x="545.3" y="432.3" font-size="7.96" fill="#ffff00" textLength="11" lengthAdjust="spacingAndGlyphs" font-weight="bold">725</text>
<text x="420.5" y="316" font-size="8.1" fill="#ffff00" textLength="50.7" lengthAdjust="spacingAndGlyphs" font-weight="bold">4 HOLES 14 DIA</text>
<path d="M481.5,312.5 L488,312.5 C498,316 505,328 513.5,333.5" stroke="#ffff00" fill="none"/>
<polygon points="514,334 510,329 508.5,331.5" stroke="#ffff00" fill="#ffff00"/>
<rect x="509.5" y="145.5" width="82" height="20" stroke="#ffffff" fill="none"/>
<line x1="515" y1="131.5" x2="590" y2="131.5" stroke="#ffffff"/>
<path d="M518.5,131.5 L515.5,131.5 A3,3 0 0 0 512.5,134.5 L512.5,142.5 A3,3 0 0 0 515.5,145.5" stroke="#ffffff" fill="none"/>
<rect x="589.5" y="123.5" width="5" height="31" stroke="#ffffff" fill="none"/>
<rect x="580.5" y="148.5" width="11" height="7" stroke="#ffffff" fill="none"/>
<line x1="591.5" y1="123" x2="591.5" y2="152" stroke="#00ff00" stroke-dasharray="8 2"/>
<line x1="589" y1="131.5" x2="595" y2="131.5" stroke="#00ff00"/>
<line x1="518.5" y1="128" x2="518.5" y2="147" stroke="#00ff00"/>
<line x1="508" y1="139.5" x2="596" y2="139.5" stroke="#00ff00"/>
<polyline points="523.5,114.5 521.5,118 520,123 520,131.5" stroke="#ffffff" fill="none"/>
<polyline points="523.5,114.5 525.5,118 527,123 527,131.5" stroke="#ffffff" fill="none"/>
<line x1="522.5" y1="118" x2="522.5" y2="156" stroke="#ffffff"/>
<line x1="525.5" y1="118" x2="525.5" y2="156" stroke="#ffffff"/>
<polygon points="517.5,156.5 529.5,156.5 529.5,159.5 526.5,159.5 526,162.5 523.5,164.5 521,162.5 520.5,159.5 517.5,159.5" stroke="#ffffff" fill="none"/>
<line x1="523.5" y1="114" x2="523.5" y2="167" stroke="#00ff00"/>
<line x1="518" y1="129.5" x2="529" y2="129.5" stroke="#00ff00"/>
<line x1="520" y1="159" x2="523.5" y2="163" stroke="#00ff00"/>
<line x1="527" y1="159" x2="523.5" y2="163" stroke="#00ff00"/>
<polyline points="537.5,114.5 535.5,118 534,123 534,131.5" stroke="#ffffff" fill="none"/>
<polyline points="537.5,114.5 539.5,118 541,123 541,131.5" stroke="#ffffff" fill="none"/>
<line x1="536.5" y1="118" x2="536.5" y2="156" stroke="#ffffff"/>
<line x1="539.5" y1="118" x2="539.5" y2="156" stroke="#ffffff"/>
<polygon points="531.5,156.5 543.5,156.5 543.5,159.5 540.5,159.5 540,162.5 537.5,164.5 535,162.5 534.5,159.5 531.5,159.5" stroke="#ffffff" fill="none"/>
<line x1="537.5" y1="114" x2="537.5" y2="167" stroke="#00ff00"/>
<line x1="532" y1="129.5" x2="543" y2="129.5" stroke="#00ff00"/>
<line x1="534" y1="159" x2="537.5" y2="163" stroke="#00ff00"/>
<line x1="541" y1="159" x2="537.5" y2="163" stroke="#00ff00"/>
<polyline points="550.5,114.5 548.5,118 547,123 547,131.5" stroke="#ffffff" fill="none"/>
<polyline points="550.5,114.5 552.5,118 554,123 554,131.5" stroke="#ffffff" fill="none"/>
<line x1="549.5" y1="118" x2="549.5" y2="156" stroke="#ffffff"/>
<line x1="552.5" y1="118" x2="552.5" y2="156" stroke="#ffffff"/>
<polygon points="544.5,156.5 556.5,156.5 556.5,159.5 553.5,159.5 553,162.5 550.5,164.5 548,162.5 547.5,159.5 544.5,159.5" stroke="#ffffff" fill="none"/>
<line x1="550.5" y1="114" x2="550.5" y2="167" stroke="#00ff00"/>
<line x1="545" y1="129.5" x2="556" y2="129.5" stroke="#00ff00"/>
<line x1="547" y1="159" x2="550.5" y2="163" stroke="#00ff00"/>
<line x1="554" y1="159" x2="550.5" y2="163" stroke="#00ff00"/>
<polyline points="564.5,114.5 562.5,118 561,123 561,131.5" stroke="#ffffff" fill="none"/>
<polyline points="564.5,114.5 566.5,118 568,123 568,131.5" stroke="#ffffff" fill="none"/>
<line x1="563.5" y1="118" x2="563.5" y2="156" stroke="#ffffff"/>
<line x1="566.5" y1="118" x2="566.5" y2="156" stroke="#ffffff"/>
<polygon points="558.5,156.5 570.5,156.5 570.5,159.5 567.5,159.5 567,162.5 564.5,164.5 562,162.5 561.5,159.5 558.5,159.5" stroke="#ffffff" fill="none"/>
<line x1="564.5" y1="114" x2="564.5" y2="167" stroke="#00ff00"/>
<line x1="559" y1="129.5" x2="570" y2="129.5" stroke="#00ff00"/>
<line x1="561" y1="159" x2="564.5" y2="163" stroke="#00ff00"/>
<line x1="568" y1="159" x2="564.5" y2="163" stroke="#00ff00"/>
<polyline points="577.5,114.5 575.5,118 574,123 574,131.5" stroke="#ffffff" fill="none"/>
<polyline points="577.5,114.5 579.5,118 581,123 581,131.5" stroke="#ffffff" fill="none"/>
<line x1="576.5" y1="118" x2="576.5" y2="156" stroke="#ffffff"/>
<line x1="579.5" y1="118" x2="579.5" y2="156" stroke="#ffffff"/>
<polygon points="571.5,156.5 583.5,156.5 583.5,159.5 580.5,159.5 580,162.5 577.5,164.5 575,162.5 574.5,159.5 571.5,159.5" stroke="#ffffff" fill="none"/>
<line x1="577.5" y1="114" x2="577.5" y2="167" stroke="#00ff00"/>
<line x1="572" y1="129.5" x2="583" y2="129.5" stroke="#00ff00"/>
<line x1="574" y1="159" x2="577.5" y2="163" stroke="#00ff00"/>
<line x1="581" y1="159" x2="577.5" y2="163" stroke="#00ff00"/>
<path d="M528.5,145.5 L528.5,136.5 A3,3.5 0 0 1 534.5,136.5 L534.5,145.5" stroke="#ffffff" fill="none"/>
<path d="M541.5,145.5 L541.5,136.5 A3,3.5 0 0 1 547.5,136.5 L547.5,145.5" stroke="#ffffff" fill="none"/>
<path d="M556.5,145.5 L556.5,136.5 A3,3.5 0 0 1 562.5,136.5 L562.5,145.5" stroke="#ffffff" fill="none"/>
<path d="M569.5,145.5 L569.5,136.5 A3,3.5 0 0 1 575.5,136.5 L575.5,145.5" stroke="#ffffff" fill="none"/>
<path d="M539.5,131.5 L539.5,124 A11,10 0 0 1 561.5,124 L561.5,131.5" stroke="#ffffff" fill="none"/>
<path d="M541.5,131.5 L541.5,124 A9,8 0 0 1 559.5,124 L559.5,131.5" stroke="#ffffff" fill="none"/>
<path d="M543.5,131.5 L543.5,124 A2.8,3 0 0 1 549,124 L549,131.5" stroke="#ffffff" fill="none"/>
<path d="M552.5,131.5 L552.5,124 A2.8,3 0 0 1 558,124 L558,131.5" stroke="#ffffff" fill="none"/>
<path d="M541.5,121 A10,5 0 0 1 560,121" stroke="#00ff00" fill="none"/>
<line x1="541" y1="120" x2="546" y2="126" stroke="#00ff00"/>
<line x1="560" y1="120" x2="555" y2="126" stroke="#00ff00"/>
<line x1="550.5" y1="111" x2="550.5" y2="178" stroke="#00ff00"/>
<path d="M545.5,153 A5,4 0 0 1 555.5,153" stroke="#00ff00" fill="none"/>
<line x1="546.5" y1="162" x2="546.5" y2="176" stroke="#00ff00"/>
<line x1="555.5" y1="162" x2="555.5" y2="176" stroke="#00ff00"/>
<line x1="543" y1="173.5" x2="558" y2="173.5" stroke="#00ff00"/>
<line x1="545" y1="175.5" x2="557" y2="175.5" stroke="#00ff00"/>
<line x1="547" y1="177.5" x2="555" y2="177.5" stroke="#00ff00"/>
<circle cx="573.5" cy="97.5" r="5.2" stroke="#ffffff" fill="none"/>
<line x1="566" y1="97.5" x2="583" y2="97.5" stroke="#00ff00"/>
<line x1="573.5" y1="89" x2="573.5" y2="105" stroke="#00ff00"/>
<line x1="573.5" y1="107" x2="573.5" y2="140" stroke="#00ff00" stroke-dasharray="9 2"/>
<line x1="574" y1="97" x2="577" y2="93.5" stroke="#ffffff"/>
<text x="540" y="109.8" font-size="10.61" fill="#00ffff" textLength="9" lengthAdjust="spacingAndGlyphs">N1</text>
</svg>
</body></html>
